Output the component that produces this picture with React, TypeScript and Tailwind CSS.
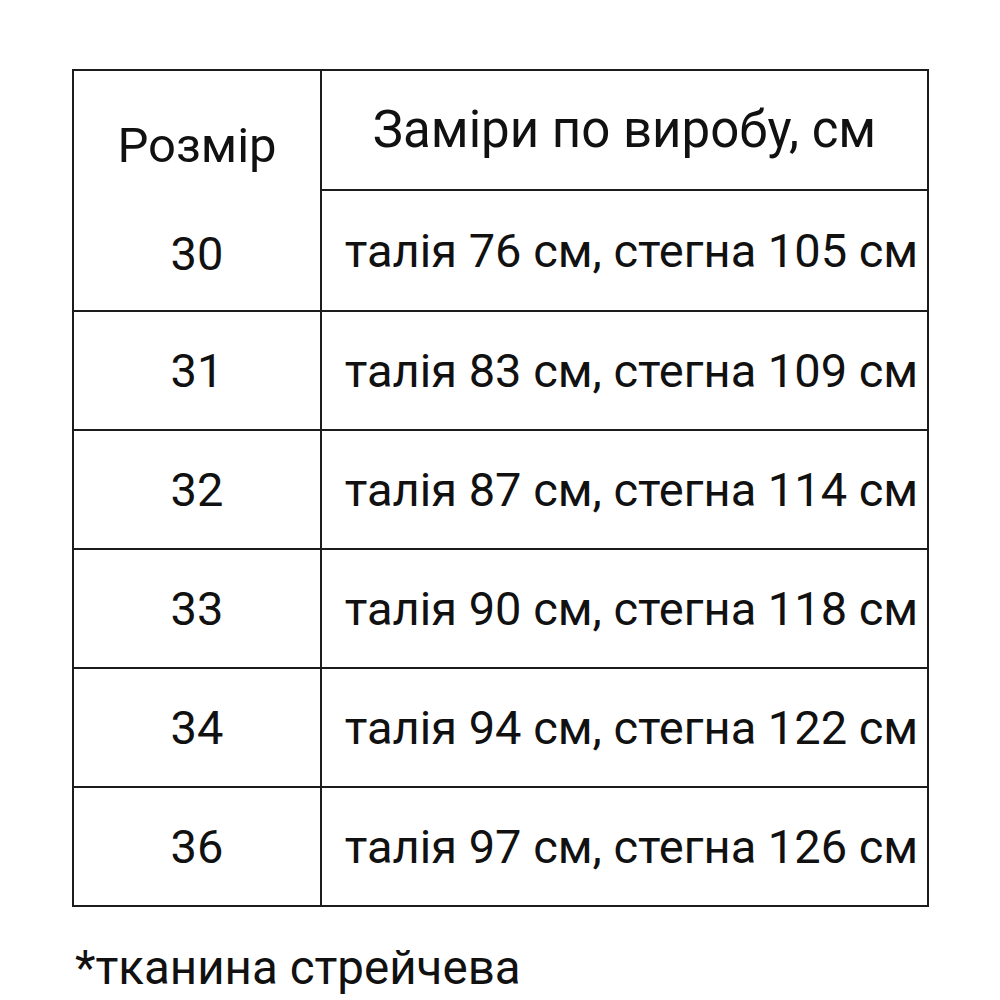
const rows = [
  { size: "31", text: "талія 83 см, стегна 109 см" },
  { size: "32", text: "талія 87 см, стегна 114 см" },
  { size: "33", text: "талія 90 см, стегна 118 см" },
  { size: "34", text: "талія 94 см, стегна 122 см" },
  { size: "36", text: "талія 97 см, стегна 126 см" },
];

export default function App() {
  return (
    <div
      className="w-[1000px] h-[1000px] bg-white text-[#111] overflow-hidden"
      style={{ fontFamily: "Roboto, 'Noto Sans', sans-serif" }}
    >
      <div className="ml-[72px] mt-[69px] w-[857px] border-2 border-[#1c1c1c]">
        {/* header + first row share the size column */}
        <div className="flex h-[241px] border-b-2 border-[#1c1c1c]">
          <div className="w-[248px] shrink-0 border-r-2 border-[#1c1c1c] flex flex-col items-center pt-[50px] leading-none">
            <span className="text-[49px]">Розмір</span>
            <span className="mt-[60px] text-[47px]">30</span>
          </div>
          <div className="flex-1 flex flex-col">
            <div className="h-[120px] border-b-2 border-[#1c1c1c] flex items-center justify-center text-[51px] leading-none pb-[2px]">
              Заміри по виробу, см
            </div>
            <div className="flex-1 flex items-center justify-center pl-[14px] text-[47px] leading-none">
              талія 76 см, стегна 105 см
            </div>
          </div>
        </div>
        {rows.map((r, i) => (
          <div
            key={r.size}
            className={
              i === rows.length - 1
                ? "flex h-[117px]"
                : "flex h-[119px] border-b-2 border-[#1c1c1c]"
            }
          >
            <div className="w-[248px] shrink-0 border-r-2 border-[#1c1c1c] flex items-center justify-center text-[47px] leading-none">
              {r.size}
            </div>
            <div className="flex-1 flex items-center justify-center pl-[14px] text-[47px] leading-none">
              {r.text}
            </div>
          </div>
        ))}
      </div>
      <div className="ml-[75px] mt-[38px] text-[47.5px] leading-none">*тканина стрейчева</div>
    </div>
  );
}
